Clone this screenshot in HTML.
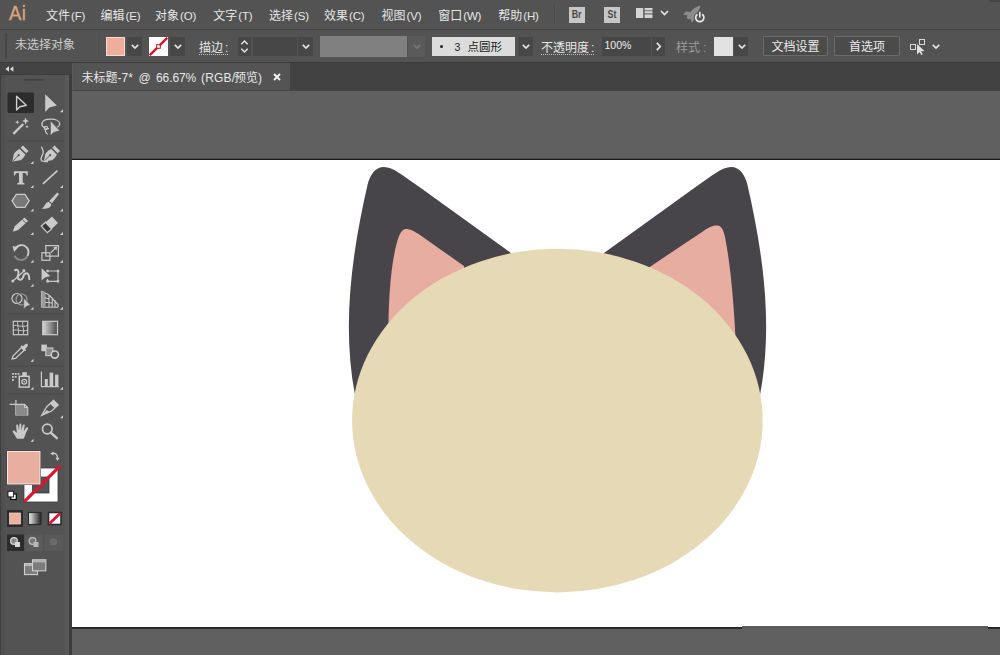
<!DOCTYPE html>
<html lang="zh">
<head>
<meta charset="utf-8">
<title>Adobe Illustrator</title>
<style>
*{box-sizing:border-box;margin:0;padding:0}
html,body{width:1000px;height:655px;overflow:hidden}
body{position:relative;background:#535353;font-family:"Liberation Sans","Noto Sans CJK SC",sans-serif;font-size:12px;color:#e3e3e3;line-height:14px}
.abs,.abs>*{position:absolute}
.cj{font-family:"Liberation Sans","Noto Sans CJK SC",sans-serif;font-size:12px}
#menubar{left:0;top:0;width:1000px;height:29px;background:#535353}
#menuline{left:0;top:29px;width:1000px;height:1px;background:#404040}
#ctrl{left:0;top:30px;width:1000px;height:32px;background:#535353}
#ctrlline{left:0;top:62px;width:1000px;height:1px;background:#3c3c3c}
.mi{top:8.500px;white-space:nowrap;color:#e6e6e6}
#tabbar{left:72px;top:63px;width:928px;height:27px;background:#424242}
#tab{left:72px;top:63px;width:218px;height:27px;background:#545454;border-left:1.500px solid #5b5b5b}
#tabline{left:72px;top:90px;width:928px;height:1.500px;background:#454545}
#canvas{left:72px;top:91px;width:928px;height:564px;background:#606060}
#artboard{left:72px;top:160px;width:928px;height:467px;background:#fff}
#tools{left:0;top:63px;width:72px;height:592px;background:linear-gradient(90deg,#3f3f3f 0,#3f3f3f 1.500px,#4f4f4f 1.500px,#4f4f4f 5.500px,#535353 5.500px,#535353 65px,#585858 65px,#585858 69.500px,#3c3c3c 69.500px)}
#toolhead{left:0;top:63px;width:72px;height:11.500px;background:#434343;border-bottom:1px solid #3d3d3d}

.cb{top:37px;height:19px}
.cb>span,.cb>svg{position:absolute}
.dd{top:37px;height:19px;width:15px;background:#474747}
.dd svg,.chev{position:absolute;left:3.500px;top:7px}
.lbl{top:41.200px;white-space:nowrap;color:#e6e6e6}
.dot{border-bottom:1px dotted #c0c0c0;height:13.800px}
.btn{top:36px;height:20px;border:1px solid #6b6b6b;background:#4b4b4b;text-align:center;line-height:20px;color:#eaeaea;border-radius:1px}

.sq{top:7px;width:16px;height:16px;background:#c6c6c6;color:#4a4a4a;font-weight:bold;font-size:10px;line-height:16.500px;text-align:center}
.sq span{display:inline-block;transform:scaleX(0.88)}
.tt{top:71.300px;white-space:nowrap;color:#e6e6e6}
.la{font-size:11.500px;letter-spacing:-0.150px;margin-left:1px}
</style>
</head>
<body>
<div class="abs">
<div id="menubar"></div>
<div id="menuline"></div>
<div style="left:0;top:28px;width:1000px;height:1px;background:#585858"></div>
<div style="left:989px;top:0;width:11px;height:2px;background:#464646"></div>
<div id="ctrl"></div>
<div id="ctrlline"></div>
<div id="tabbar"></div>
<div id="tab"></div>
<div id="tabline"></div>
<div id="canvas"></div>
<div id="artboard"></div>
<svg style="left:72px;top:158px" width="928" height="472" viewBox="72 158 928 472"><rect x="72" y="158.700" width="928" height="1.300" fill="#1c1c1c"/><rect x="72" y="627.200" width="670" height="1.500" fill="#161616"/><rect x="742" y="626.300" width="246" height="1.100" fill="#222"/><rect x="742" y="627.400" width="246" height="1.400" fill="#606060"/><rect x="988" y="627.200" width="12" height="1.500" fill="#161616"/></svg>
<div id="tools"></div>
<div id="toolhead"></div>

<svg id="toolicons" style="left:0;top:63px" width="72" height="592" viewBox="0 63 72 592" fill="#cacaca" stroke="none">
<defs>
<linearGradient id="gr1" x1="0" x2="1" y1="0" y2="0"><stop offset="0" stop-color="#d8d8d8"/><stop offset="1" stop-color="#4a4a4a"/></linearGradient>
<linearGradient id="gr2" x1="0" x2="1" y1="0" y2="0"><stop offset="0" stop-color="#f4f4f4"/><stop offset="1" stop-color="#222"/></linearGradient>
<path id="tri" d="M0 3 h3 v-3 z" fill="#d2d2d2"/>
<g id="pen">
<path d="M12.300 161.500 L13.900 153.800 C15.500 151.200 17.800 149.600 19.700 148.900 L25.300 154.500 C24.600 156.400 23 158.700 20.400 160.300 Z"/>
<path d="M20.700 147.800 L23 145.500 L28.500 151 L26.200 153.300 Z"/>
<path d="M12.800 161 L18 155.800" stroke="#535353" stroke-width="0.900" fill="none"/>
<circle cx="18.600" cy="155.200" r="1.100" fill="#535353"/>
</g>
</defs>
<!-- grip -->
<rect x="24.500" y="79" width="19" height="1.600" fill="#404040"/>
<!-- row1 -->
<rect x="7.500" y="92.500" width="26.500" height="20.500" rx="1.500" fill="#2c2c2c"/>
<path d="M16.600 96.300 V110 L19.800 106.800 L26.300 105.200 Z" fill="none" stroke="#cfcfcf" stroke-width="1.400" stroke-linejoin="round"/>
<path d="M45.200 94.300 V111.900 L49.400 107.500 L56.900 105.400 Z"/>
<use href="#tri" x="60" y="109.300"/>
<!-- row2 wand / lasso -->
<line x1="13.300" y1="133.900" x2="23.300" y2="124" stroke="#cacaca" stroke-width="2.300"/>
<path d="M25.600 117.300 L26.600 120 L29.300 121 L26.600 122 L25.600 124.700 L24.600 122 L21.900 121 L24.600 120 Z"/>
<path d="M17.300 120 L17.900 121.600 L19.500 122.200 L17.900 122.800 L17.300 124.400 L16.700 122.800 L15.100 122.200 L16.700 121.600 Z"/>
<path d="M27 124.800 L27.500 126.200 L28.900 126.700 L27.500 127.200 L27 128.600 L26.500 127.200 L25.100 126.700 L26.500 126.200 Z"/>
<path d="M49 128.600 C44.500 128.600 41.600 126.600 41.900 123.800 C42.200 120.900 46 119.200 50.800 119.200 C56 119.200 59.700 121.100 59.700 123.900 C59.700 125.400 58.700 126.600 57 127.400" fill="none" stroke="#cacaca" stroke-width="1.300"/>
<circle cx="45.900" cy="128" r="1.700" fill="none" stroke="#cacaca" stroke-width="1.100"/>
<path d="M45.300 129.800 C45.200 131.800 46.200 133.400 47.800 134.400" fill="none" stroke="#cacaca" stroke-width="1.100"/>
<path d="M50.300 120.600 V136 L53.700 132.400 L60 130.800 Z" stroke="#535353" stroke-width="0.800"/>
<!-- sep -->
<rect x="7" y="140.500" width="57" height="1" fill="#4a4a4a"/>
<!-- row3 pens -->
<use href="#pen"/>
<use href="#tri" x="30.500" y="161"/>
<use href="#pen" x="31.500"/>
<path d="M41.300 146.800 C42.500 149 44.200 150.500 43 153.500 C41.800 156.500 40.200 158.500 41.300 160.300 C42.200 161.600 44.500 161.500 48 161.500" fill="none" stroke="#cacaca" stroke-width="1.300"/>
<!-- row4 T / line -->
<path d="M13.900 171.300 H27.800 V175.600 H26.700 C26.400 173.700 25.600 173.100 24 173.100 H22.700 V181.500 C22.700 182.700 23.200 183.100 24.500 183.200 V184.400 H17.200 V183.200 C18.500 183.100 19 182.700 19 181.500 V173.100 H17.700 C16.100 173.100 15.300 173.700 15 175.600 H13.900 Z"/>
<use href="#tri" x="30.500" y="185"/>
<line x1="42.900" y1="183.900" x2="57.400" y2="170.700" stroke="#cacaca" stroke-width="1.700"/>
<use href="#tri" x="60" y="185"/>
<!-- row5 hexagon / brush -->
<path d="M12 200.800 L16.300 194.300 H24.900 L29.200 200.800 L24.900 207.300 H16.300 Z" fill="#787878" stroke="#cacaca" stroke-width="1.300"/>
<use href="#tri" x="30.500" y="208.500"/>
<path d="M57.300 192.400 L59 193.900 L52 203.300 L49.300 201 Z"/>
<path d="M48.500 201.800 L51.200 204 C51.600 207.400 47.500 209.200 41.600 208.700 C44.800 207.400 44.300 203.200 48.500 201.800 Z"/>
<use href="#tri" x="60" y="208.500"/>
<!-- row6 pencil / eraser -->
<path d="M24.500 217.400 L28 221.100 L18.200 230.100 L12.500 231.900 L14.800 226.300 Z"/>
<path d="M22.300 219.400 L25.800 223.100" stroke="#535353" stroke-width="0.900"/>
<path d="M13.100 230.400 L12.500 231.900 L14.100 231.400 Z" fill="#535353"/>
<use href="#tri" x="30.500" y="232"/>
<path d="M52 216.400 L58 223.100 L51.600 228.900 L45.500 222.200 Z"/>
<path d="M45.500 222.200 L51.600 228.900 L47.300 232.700 L41.300 226.100 Z" fill="#383838" stroke="#cacaca" stroke-width="1.300"/>
<use href="#tri" x="60" y="232"/>
<!-- row7 rotate / scale -->
<path d="M15.600 248.300 A7 7 0 0 1 27.300 256" fill="none" stroke="#cacaca" stroke-width="1.900"/>
<path d="M27.300 256 A7 7 0 0 1 14.600 255.600" fill="none" stroke="#8a8a8a" stroke-width="1.900"/>
<path d="M12.600 246 L18.400 247.200 L14 252 Z"/>
<use href="#tri" x="30.500" y="259.800"/>
<rect x="41.900" y="252.800" width="8" height="7.500" fill="none" stroke="#cacaca" stroke-width="1.200"/>
<rect x="45.800" y="245.600" width="12.600" height="10.500" fill="none" stroke="#cacaca" stroke-width="1.200"/>
<line x1="50.800" y1="252.600" x2="55.600" y2="248" stroke="#cacaca" stroke-width="1.300"/>
<path d="M57.200 246.400 L53.400 247.200 L56.400 250.200 Z"/>
<use href="#tri" x="60" y="259.800"/>
<!-- row8 width / free transform -->
<line x1="12.500" y1="281.500" x2="24.500" y2="270.500" stroke="#cacaca" stroke-width="1.300"/>
<rect x="11.500" y="279.800" width="2.600" height="2.600"/>
<rect x="22.600" y="269.300" width="2.600" height="2.600"/>
<path d="M14.500 271 C15.500 269 18 269.500 18.500 272 C19 275 16 277 18.500 279 C21 281 23 278.500 23.500 276 C24 273.500 26.500 272.500 28 274 C29.500 275.500 29 278.500 29.500 280" fill="none" stroke="#cacaca" stroke-width="2"/>
<use href="#tri" x="30.500" y="283.800"/>
<path d="M41.600 268.300 V280.600 L44.600 277.700 L50.200 275.900 Z"/>
<path d="M48.500 271 H58 V281.300 H47.500 V279" fill="none" stroke="#cacaca" stroke-width="1.200"/>
<rect x="46.400" y="269.800" width="2.400" height="2.400"/><rect x="56.800" y="269.800" width="2.400" height="2.400"/><rect x="56.800" y="280.100" width="2.400" height="2.400"/><rect x="46.400" y="280.100" width="2.400" height="2.400"/>
<!-- row9 shape builder / perspective -->
<circle cx="17" cy="298.500" r="5" fill="none" stroke="#cacaca" stroke-width="1.200"/>
<circle cx="21.500" cy="299.500" r="5.500" fill="none" stroke="#a0a0a0" stroke-width="1.200"/>
<path d="M23.700 298 V309 L26.200 306.500 L30.400 305 Z" stroke="#535353" stroke-width="0.700"/>
<use href="#tri" x="30.500" y="306.800"/>
<path d="M41.500 291 V307.200 M44.800 292.500 V306.800 M41.500 291 L49 295 M41.500 307.200 H58 M49 295 V306.800 M52.300 297.500 V306.800 M55 300 V306.800 M49 295 L58 304.500 V307.200 M41.500 296.500 L49 299 M41.500 302 L52.300 303" fill="none" stroke="#cacaca" stroke-width="1.100"/>
<path d="M41.500 291 L44.800 292.500 V306.800 H41.500 Z" fill="#9a9a9a"/>
<use href="#tri" x="60" y="306.800"/>
<!-- sep -->
<rect x="7" y="313.500" width="57" height="1" fill="#4a4a4a"/>
<!-- row10 mesh / gradient -->
<rect x="13.300" y="321.300" width="14.400" height="13.400" fill="#4c4c4c" stroke="#cacaca" stroke-width="1.200"/>
<path d="M13.300 326 C17 324 22 328 27.700 325.500 M13.300 330.500 C17 328.500 22 332.500 27.700 330 M18 321.300 C16.500 325 20 330 18 334.700 M23 321.300 C21.500 325 25 330 23 334.700" fill="none" stroke="#cacaca" stroke-width="1"/>
<rect x="42.700" y="321.300" width="14.800" height="13.400" fill="url(#gr1)" stroke="#cacaca" stroke-width="1.200"/>
<!-- row11 eyedropper / blend -->
<path d="M12 359 L13 356 L21.500 347.500 L24.200 350.200 L15.500 358.500 Z" fill="none" stroke="#cacaca" stroke-width="1.300"/>
<path d="M20.500 346.500 L25.200 351.200 L26.200 350.200 L25 349 C27 347 28.500 345.500 27.600 344.200 C26.500 342.900 25 344.300 23 346.300 L21.800 345.200 Z"/>
<use href="#tri" x="30.500" y="358.800"/>
<rect x="41.300" y="344.600" width="5.600" height="6.600"/>
<rect x="45.800" y="348" width="7" height="7.600" fill="#8c8c8c" stroke="#cacaca" stroke-width="1.100"/>
<circle cx="54.800" cy="354.600" r="3.600" fill="#535353" stroke="#cacaca" stroke-width="1.700"/>
<!-- sep -->
<rect x="7" y="365.500" width="57" height="1" fill="#4a4a4a"/>
<!-- row12 sprayer / graph -->
<rect x="19.300" y="376.300" width="9.800" height="10.800" fill="none" stroke="#cacaca" stroke-width="1.500"/>
<rect x="22.300" y="372.200" width="4.500" height="4"/>
<circle cx="24.200" cy="381.700" r="2.400" fill="none" stroke="#cacaca" stroke-width="1.200"/>
<circle cx="24.200" cy="381.700" r="0.800"/>
<rect x="12" y="373" width="1.800" height="1.800"/><rect x="14.800" y="373" width="1.800" height="1.800"/><rect x="17.600" y="373" width="1.800" height="1.800"/><rect x="12" y="376" width="1.800" height="1.800"/><rect x="14.800" y="376" width="1.800" height="1.800"/><rect x="12" y="379" width="1.800" height="1.800"/>
<use href="#tri" x="30.500" y="386.800"/>
<path d="M41.400 371.500 V386.600 H58.800" fill="none" stroke="#cacaca" stroke-width="1.200"/>
<rect x="44.800" y="379" width="3" height="7"/><rect x="49.600" y="372.700" width="3.600" height="13.300"/><rect x="55.100" y="374.700" width="3.300" height="11.300"/>
<use href="#tri" x="60" y="386.800"/>
<!-- sep -->
<rect x="7" y="393.500" width="57" height="1" fill="#4a4a4a"/>
<!-- row13 artboard / slice -->
<path d="M15.900 400 V415 H27.700 V407.500 L24.500 404.300 H9.600" fill="none" stroke="#cacaca" stroke-width="1.200"/>
<path d="M16.500 405 H24.200 L27.100 408 V414.400 H16.500 Z" fill="#8a8a8a"/>
<path d="M24.500 404.300 V407.500 H27.700" fill="none" stroke="#cacaca" stroke-width="1"/>
<path d="M41.700 415.400 L46.500 407 L53.500 400.500 L58.200 405 L51.500 411 Z" fill="none" stroke="#cacaca" stroke-width="1.300"/>
<path d="M50 403.700 L53.500 400.500 L58.200 405 L54.700 408.200 Z"/>
<path d="M41.700 415.400 L46.800 410 L49.500 412 Z"/>
<use href="#tri" x="60" y="415.300"/>
<!-- row14 hand / zoom -->
<path d="M17 438.800 C15.500 436 13.800 433.500 12.800 432 C12 430.800 13.500 429.800 14.600 430.800 L16.800 433 L16.200 425.800 C16.100 424.300 18 424.200 18.200 425.600 L19 430.500 L19.400 424.600 C19.500 423.200 21.400 423.300 21.400 424.700 L21.400 430.500 L22.800 425.300 C23.200 424 25 424.400 24.700 425.800 L23.800 431.200 L26.200 427.800 C27 426.700 28.600 427.600 27.900 428.900 C26.500 431.500 25.500 434 24.800 436 C24.400 437.400 24 438.200 23.500 438.800 Z"/>
<use href="#tri" x="30.500" y="438.800"/>
<circle cx="47.300" cy="429" r="4.800" fill="none" stroke="#cacaca" stroke-width="1.700"/>
<line x1="50.800" y1="432.600" x2="56.800" y2="438.200" stroke="#cacaca" stroke-width="2.400" stroke-linecap="round"/>
<!-- color swatches -->
<rect x="24" y="468" width="34" height="34" fill="#fff" stroke="#3a3a3a" stroke-width="0.800"/>
<rect x="32.500" y="477" width="16.500" height="16" fill="#535353" stroke="#3a3a3a" stroke-width="0.800"/>
<line x1="24.300" y1="501.700" x2="60.300" y2="465.700" stroke="#dc1430" stroke-width="3.200"/>
<rect x="6.500" y="450.500" width="34.500" height="34.500" fill="#3a3a3a"/>
<rect x="7" y="451" width="33.500" height="33.500" fill="#f6e4de"/>
<rect x="8" y="452" width="31.500" height="31.500" fill="#e8ae9f"/>
<path d="M52 453.500 C55 452.500 57.500 454.500 57.500 458" fill="none" stroke="#cacaca" stroke-width="1.300"/>
<path d="M50.300 453.800 L53.300 451.600 L53.600 455.400 Z"/>
<path d="M55.500 457.800 L59.500 457.800 L57.500 461 Z"/>
<rect x="10.800" y="494" width="5.500" height="5.500" fill="#fff" stroke="#111" stroke-width="1.300"/>
<rect x="8" y="491.300" width="5.600" height="5.600" fill="#fff" stroke="#111" stroke-width="0.900"/>
<!-- color mode -->
<rect x="7" y="510" width="16" height="17" fill="#2c2c2c"/>
<rect x="9.500" y="513" width="11" height="11" fill="#eeb09e" stroke="#f6dcd2" stroke-width="0.700"/>
<rect x="28.500" y="512.500" width="12.500" height="12" fill="url(#gr2)" stroke="#2c2c2c" stroke-width="1.200"/>
<rect x="48.500" y="512.500" width="12.500" height="12" fill="#fff" stroke="#2c2c2c" stroke-width="1.600"/>
<line x1="49.300" y1="523.700" x2="60.200" y2="513.300" stroke="#dc1430" stroke-width="2.800"/>
<!-- draw modes -->
<rect x="7" y="534.500" width="17" height="16.500" fill="#2c2c2c"/>
<rect x="25.300" y="534.500" width="17.500" height="16.500" fill="#5b5b5b"/>
<rect x="44.300" y="534.500" width="19" height="16.500" fill="#595959"/>
<circle cx="14" cy="541" r="3.400" fill="#888" stroke="#d8d8d8" stroke-width="1.200"/>
<rect x="15" y="542" width="5" height="5" fill="#d8d8d8"/>
<circle cx="32.500" cy="541" r="3.400" fill="#777" stroke="#c0c0c0" stroke-width="1.200"/>
<rect x="33.500" y="542" width="5" height="5" fill="#b8b8b8"/>
<circle cx="53.500" cy="542" r="3" fill="#686868" stroke="#707070" stroke-width="1.200"/>
<!-- screen mode -->
<rect x="24.500" y="563.600" width="13" height="11" fill="#7c7c7c" stroke="#d0d0d0" stroke-width="1.100"/>
<rect x="25" y="564.100" width="12" height="2" fill="#b8b8b8"/>
<rect x="32.500" y="559.800" width="13.300" height="11" fill="#7c7c7c" stroke="#d0d0d0" stroke-width="1.100"/>
<rect x="33" y="560.300" width="12.300" height="2" fill="#b8b8b8"/>
</svg>

<!-- menu -->
<div class="mi" style="left:46px"><span class="cj">文件</span><span class="la">(F)</span></div>
<div class="mi" style="left:100.5px"><span class="cj">编辑</span><span class="la">(E)</span></div>
<div class="mi" style="left:155px"><span class="cj">对象</span><span class="la">(O)</span></div>
<div class="mi" style="left:213.2px"><span class="cj">文字</span><span class="la">(T)</span></div>
<div class="mi" style="left:269px"><span class="cj">选择</span><span class="la">(S)</span></div>
<div class="mi" style="left:324px"><span class="cj">效果</span><span class="la">(C)</span></div>
<div class="mi" style="left:381.5px"><span class="cj">视图</span><span class="la">(V)</span></div>
<div class="mi" style="left:438.2px"><span class="cj">窗口</span><span class="la">(W)</span></div>
<div class="mi" style="left:498.2px"><span class="cj">帮助</span><span class="la">(H)</span></div>



<!-- app icons -->
<div style="left:8.500px;top:1px;font-size:20.500px;line-height:24px;color:#dba57c;-webkit-text-stroke:0.350px #dba57c;transform:scaleX(0.9);transform-origin:0 0;letter-spacing:0.500px">Ai</div>
<div style="left:554px;top:4px;width:1px;height:21px;background:#4a4a4a"></div>
<div style="left:555px;top:4px;width:1px;height:21px;background:#585858"></div>
<div class="sq" style="left:569px"><span>Br</span></div>
<div class="sq" style="left:604px"><span>St</span></div>
<svg style="left:635px;top:7px" width="19" height="12" viewBox="635 7 19 12" fill="#d4d4d4"><rect x="636" y="8" width="7.200" height="10"/><rect x="644.600" y="8" width="7.900" height="2.400"/><rect x="644.600" y="11.200" width="7.900" height="2.200"/><rect x="644.600" y="14.400" width="7.900" height="3.600"/></svg>
<svg style="left:660px;top:10px" width="9" height="6" viewBox="0 0 9 6"><polyline points="1,1 4.500,4.500 8,1" fill="none" stroke="#e4e4e4" stroke-width="1.700"/></svg>
<svg style="left:680px;top:3px" width="28" height="22" viewBox="680 3 28 22">
<path d="M700.500 5.500 C697 6 693 8.500 690.500 12 L686 11.500 L683 14.500 L687.500 15.500 L686.500 17.500 L688.500 19.500 L690.500 18.500 L691.500 22.500 L694.500 19.500 L694 15.500 C697.500 13 700 9.500 700.500 5.500 Z" fill="#8c8c8c"/>
<circle cx="699.800" cy="17.600" r="5.800" fill="#535353"/>
<path d="M697.400 14.300 A4.100 4.100 0 1 0 702.200 14.300" fill="none" stroke="#e8e8e8" stroke-width="1.700"/>
<line x1="699.800" y1="11.800" x2="699.800" y2="17.500" stroke="#e8e8e8" stroke-width="1.700"/>
</svg>
<!-- tab text -->
<div class="tt" style="left:81.500px"><span class="cj">未标题</span></div>
<div class="tt" style="left:117.500px">-7*</div>
<div class="tt" style="left:138.500px">@</div>
<div class="tt" style="left:156px;letter-spacing:-0.100px">66.67%</div>
<div class="tt" style="left:201px;letter-spacing:0.200px">(RGB/</div>
<div class="tt" style="left:234px"><span class="cj">预览</span>)</div>
<svg style="left:273px;top:73px" width="8" height="8" viewBox="0 0 8 8"><path d="M1 1 L7 7 M7 1 L1 7" stroke="#f0f0f0" stroke-width="2" fill="none"/></svg>
<!-- toolbar header arrows -->
<svg style="left:5px;top:66px" width="9" height="6" viewBox="0 0 9 6" fill="#d8d8d8"><path d="M4 0.300 V5.700 L0.400 3 Z M8.400 0.300 V5.700 L4.800 3 Z"/></svg>

<!-- control bar -->
<div style="left:5px;top:33px;width:1.500px;height:26px;background:#464646"></div>
<div style="left:97px;top:33px;width:1px;height:25px;background:#565656"></div>
<div style="left:98px;top:33px;width:1px;height:25px;background:#4e4e4e"></div>
<div class="lbl" style="left:15px;top:38.300px;color:#cdcdcd"><span class="cj">未选择对象</span></div>
<div class="cb" style="left:106px;width:19px;background:#efad9c;border:1px solid #f3dbd2"></div>
<div class="dd" style="left:127px"><svg width="8" height="5" viewBox="0 0 8 5"><polyline points="0.800,0.800 4,4 7.200,0.800" fill="none" stroke="#e4e4e4" stroke-width="1.700"/></svg></div>
<div class="cb" style="left:149px;width:19px;background:#fff"><svg width="19" height="19" viewBox="0 0 19 19" style="left:0;top:0"><line x1="0.800" y1="18.200" x2="18.200" y2="0.800" stroke="#d4102a" stroke-width="2.300"/><rect x="7.700" y="7.700" width="3.600" height="3.600" fill="#fff" stroke="#c01020" stroke-width="1"/></svg></div>
<div class="dd" style="left:170px"><svg width="8" height="5" viewBox="0 0 8 5"><polyline points="0.800,0.800 4,4 7.200,0.800" fill="none" stroke="#e4e4e4" stroke-width="1.700"/></svg></div>
<div class="lbl dot" style="left:199px"><span class="cj">描边</span><span style="margin-left:2px">:</span></div>
<div class="cb" style="left:238px;width:13px;background:#474747"><svg width="13" height="19" viewBox="0 0 13 19" style="left:0;top:0"><polyline points="3.300,7.200 6.500,4 9.700,7.200" fill="none" stroke="#e4e4e4" stroke-width="1.500"/><polyline points="3.300,11.800 6.500,15 9.700,11.800" fill="none" stroke="#e4e4e4" stroke-width="1.500"/></svg></div>
<div class="cb" style="left:253px;width:44px;background:#474747"></div>
<div class="dd" style="left:298px"><svg width="8" height="5" viewBox="0 0 8 5"><polyline points="0.800,0.800 4,4 7.200,0.800" fill="none" stroke="#e4e4e4" stroke-width="1.700"/></svg></div>
<div class="cb" style="left:320px;width:87px;background:#808080;top:36px;height:21px"></div>
<div class="dd" style="left:408px;width:17px;background:#5a5a5a;top:36px;height:21px"><svg class="chev" width="8" height="5" viewBox="0 0 8 5" style="left:4.500px;top:8px"><polyline points="0.800,0.800 4,4 7.200,0.800" fill="none" stroke="#777" stroke-width="1.700"/></svg></div>
<div class="cb" style="left:432px;width:83px;background:#dcdcdc;color:#222;line-height:20px"><span style="left:8px;top:8px;width:3px;height:3px;border-radius:2px;background:#222"></span><span style="left:22.500px;top:0;font-size:10.500px">3</span><span style="left:35.500px;top:0;white-space:nowrap"><span class="cj" style="font-size:11.5px">点圆形</span></span></div>
<div class="dd" style="left:518px"><svg width="8" height="5" viewBox="0 0 8 5"><polyline points="0.800,0.800 4,4 7.200,0.800" fill="none" stroke="#e4e4e4" stroke-width="1.700"/></svg></div>
<div class="lbl dot" style="left:541px"><span class="cj">不透明度</span><span style="margin-left:2px">:</span></div>
<div class="cb" style="left:602px;width:49px;background:#474747;color:#eee;font-size:10.500px;line-height:17px;padding-left:2.500px">100%</div>
<div class="cb" style="left:652px;width:13px;background:#474747"><svg width="13" height="19" viewBox="0 0 13 19" style="left:0;top:0"><polyline points="4.800,5.800 8.300,9.500 4.800,13.200" fill="none" stroke="#e4e4e4" stroke-width="1.700"/></svg></div>
<div class="lbl" style="left:676px;color:#9c9c9c"><span class="cj">样式</span><span style="margin-left:3px">:</span></div>
<div class="cb" style="left:714px;width:19px;background:#e2e2e2"></div>
<div class="dd" style="left:734px;width:14px"><svg width="8" height="5" viewBox="0 0 8 5"><polyline points="0.800,0.800 4,4 7.200,0.800" fill="none" stroke="#e4e4e4" stroke-width="1.700"/></svg></div>
<div class="btn" style="left:763px;width:65px"><span class="cj">文档设置</span></div>
<div class="btn" style="left:834px;width:66px"><span class="cj">首选项</span></div>
<svg style="left:909px;top:38px" width="18" height="18" viewBox="0 0 18 18"><rect x="1.500" y="6.500" width="5" height="5" fill="none" stroke="#d8d8d8" stroke-width="1"/><rect x="10.500" y="1.500" width="5" height="5" fill="none" stroke="#d8d8d8" stroke-width="1"/><path d="M8 6 L8 16.500 L10.500 14 L12.300 17 L13.800 16.200 L12 13.300 L15.500 13 Z" fill="#e0e0e0"/></svg>
<svg style="left:932px;top:44px" width="8" height="5" viewBox="0 0 8 5"><polyline points="0.800,0.800 4,4 7.200,0.800" fill="none" stroke="#e4e4e4" stroke-width="1.700"/></svg>

<!-- cat -->
<svg style="left:73px;top:160px" width="927" height="467" viewBox="73 160 927 467">
<path id="earo" fill="#47454a" d="M356 401 L355 395 C341.700 324.900 351.900 253.600 367.500 185 C370 175 375 167 384 167 C393 167 403 175.700 418 186 L511 252.900 L540 330 Z"/>
<use href="#earo" transform="translate(1115 0) scale(-1 1)"/>
<path fill="#e6ada0" d="M388.300 349 C388 300 390.500 268 396.500 244 C399 234 402 229 406 229 C410 229 414 231 420 235 L464 266 L470 349 Z"/>
<path fill="#e6ada0" d="M640 273.400 L703.500 231 C709.500 227 713.500 225.400 717.500 225.600 C721.500 225.800 723.600 230.500 725 237 C730 262 733 295 734.800 325 L736 349 L650 349 Z"/>
<ellipse cx="557.4" cy="420.600" rx="205.300" ry="171.800" fill="#e5d9b6"/>
</svg>
</div>
</body>
</html>
